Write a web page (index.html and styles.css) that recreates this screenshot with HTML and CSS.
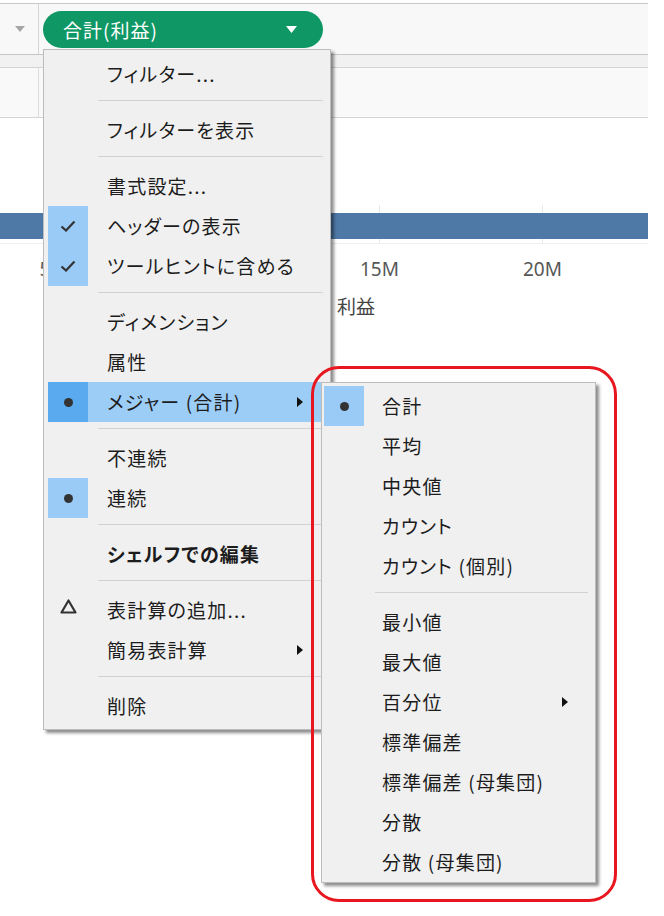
FILE: index.html
```html
<!DOCTYPE html>
<html lang="ja">
<head>
  <meta charset="UTF-8" />
  <meta name="viewport" content="width=device-width, initial-scale=1.0" />
  <title>メジャーのメニュー</title>
  <link rel="stylesheet" href="styles.css">
</head>
<body>
  <div class="view">
    <div class="shelf">
      <div class="shelf-cap">
        <svg class="caret" width="10" height="6" viewBox="0 0 10 6"><path d="M0 0h10L5 6z" fill="#a6a6a6"/></svg>
      </div>
      <div class="pill">
        <span>合計(利益)</span>
        <svg width="11" height="7" viewBox="0 0 11 7"><path d="M0 0h11L5.5 7z" fill="#fff"/></svg>
      </div>
    </div>
    <div class="band"></div>
    <div class="header-row"><div class="header-cap"></div></div>

    <div class="chart">
      <div class="plot">
        <div class="bar"></div>
      </div>
      <div class="ticks">
        <span>5M</span>
        <span></span>
        <span>15M</span>
        <span>20M</span>
      </div>
      <div class="axis-title">利益</div>
    </div>
  </div>

  <!-- context menu for the pill -->
  <div class="menu main-menu">
    <div class="item"><span class="ico"></span><span class="label">フィルター...</span></div>
    <div class="sep"></div>
    <div class="item"><span class="ico"></span><span class="label">フィルターを表示</span></div>
    <div class="sep"></div>
    <div class="item"><span class="ico"></span><span class="label">書式設定...</span></div>
    <div class="item"><span class="ico on"><svg width="16" height="12" viewBox="0 0 16 12"><path d="M1.5 6.5l4.5 4L14.5 1.5" fill="none" stroke="#333" stroke-width="2.2"/></svg></span><span class="label">ヘッダーの表示</span></div>
    <div class="item"><span class="ico on"><svg width="16" height="12" viewBox="0 0 16 12"><path d="M1.5 6.5l4.5 4L14.5 1.5" fill="none" stroke="#333" stroke-width="2.2"/></svg></span><span class="label">ツールヒントに含める</span></div>
    <div class="sep"></div>
    <div class="item"><span class="ico"></span><span class="label">ディメンション</span></div>
    <div class="item"><span class="ico"></span><span class="label">属性</span></div>
    <div class="item hot"><span class="ico"><span class="dot"></span></span><span class="label">メジャー (合計)</span><span class="sub-arrow"></span></div>
    <div class="sep"></div>
    <div class="item"><span class="ico"></span><span class="label">不連続</span></div>
    <div class="item"><span class="ico on"><span class="dot"></span></span><span class="label">連続</span></div>
    <div class="sep"></div>
    <div class="item"><span class="ico"></span><span class="label bold">シェルフでの編集</span></div>
    <div class="sep"></div>
    <div class="item"><span class="ico delta"><svg width="17" height="15" viewBox="0 0 17 15"><path d="M8.5 1.5L1.5 13.5h14z" fill="none" stroke="#333" stroke-width="2.2" stroke-linejoin="round"/></svg></span><span class="label">表計算の追加...</span></div>
    <div class="item"><span class="ico"></span><span class="label">簡易表計算</span><span class="sub-arrow"></span></div>
    <div class="sep"></div>
    <div class="item"><span class="ico"></span><span class="label">削除</span></div>
  </div>

  <!-- aggregation submenu -->
  <div class="menu sub-menu">
    <div class="item"><span class="ico on"><span class="dot"></span></span><span class="label">合計</span></div>
    <div class="item"><span class="ico"></span><span class="label">平均</span></div>
    <div class="item"><span class="ico"></span><span class="label">中央値</span></div>
    <div class="item"><span class="ico"></span><span class="label">カウント</span></div>
    <div class="item"><span class="ico"></span><span class="label">カウント (個別)</span></div>
    <div class="sep"></div>
    <div class="item"><span class="ico"></span><span class="label">最小値</span></div>
    <div class="item"><span class="ico"></span><span class="label">最大値</span></div>
    <div class="item"><span class="ico"></span><span class="label">百分位</span><span class="sub-arrow"></span></div>
    <div class="item"><span class="ico"></span><span class="label">標準偏差</span></div>
    <div class="item"><span class="ico"></span><span class="label">標準偏差 (母集団)</span></div>
    <div class="item"><span class="ico"></span><span class="label">分散</span></div>
    <div class="item"><span class="ico"></span><span class="label">分散 (母集団)</span></div>
  </div>

  <div class="callout"></div>
</body>
</html>
```

FILE: styles.css
```css
body {
  margin: 0;
  width: 664px;
  height: 916px;
  position: relative;
  overflow: hidden;
  background-color: #fff;
  font-family: "Noto Sans CJK JP", "Noto Sans", sans-serif;
  color: #1c1c1c;
}
.view {
  width: 648px;
  padding-top: 3px;
}
.shelf {
  display: flex;
  height: 50px;
  border-top: 1px solid #c9c9c9;
  border-bottom: 1px solid #c6c6c6;
  background-color: #f8f8f8;
}
.shelf-cap {
  width: 38px;
  border-right: 1px solid #d6d6d6;
  display: flex;
  align-items: center;
  justify-content: center;
}
.caret {
  margin-left: 2px;
}
.pill {
  margin: 7px 0 0 4px;
  width: 280px;
  height: 37px;
  box-sizing: border-box;
  padding: 0 26px 0 20px;
  border-radius: 19px;
  background-color: #0f9865;
  color: #fff;
  display: flex;
  align-items: center;
  justify-content: space-between;
  font-size: 19px;
  letter-spacing: 1px;
}
.band {
  height: 12px;
  background-color: #f1f1f1;
  border-bottom: 1px solid #d4d4d4;
}
.header-row {
  height: 49px;
  background-color: #f9f9f9;
  border-bottom: 1px solid #d4d4d4;
}
.header-cap {
  width: 38px;
  height: 100%;
  border-right: 1px solid #dcdcdc;
}
.chart {
  padding-top: 87px;
}
.plot {
  padding: 8px 0 4px;
  border-bottom: 1px solid #efefef;
  background-image: repeating-linear-gradient(90deg, transparent 0, transparent 162px, #e9e9e9 162px, #e9e9e9 163px);
  background-position: 54px 0;
}
.bar {
  height: 26px;
  background-color: #4e79a7;
}
.ticks {
  display: grid;
  grid-template-columns: repeat(4, 163px);
  margin-left: -28px;
  padding-top: 13px;
  font-family: "Noto Sans", sans-serif;
  font-size: 19px;
  line-height: 24px;
  color: #575757;
  text-align: center;
}
.axis-title {
  padding: 12px 0 0 337px;
  font-size: 19px;
  line-height: 26px;
  color: #444;
}

/* menus */
.menu {
  position: absolute;
  box-sizing: border-box;
  background-color: #f0f0f0;
  border: 1px solid #bdbdbd;
  box-shadow: 3px 3px 3px rgba(0, 0, 0, 0.45);
  font-size: 19px;
  letter-spacing: 1.2px;
  font-feature-settings: "palt";
}
.main-menu {
  left: 43px;
  top: 49px;
  width: 288px;
  padding: 4px 4px 3px;
}
.sub-menu {
  left: 321px;
  top: 382px;
  width: 275px;
  height: 501px;
  padding: 3px 3px 0 2px;
}
.item {
  display: flex;
  align-items: center;
  height: 40px;
  line-height: 40px;
}
.ico {
  width: 40px;
  height: 40px;
  flex: none;
  display: flex;
  align-items: center;
  justify-content: center;
}
.ico.on {
  background-color: #99cbf6;
}
.ico.delta {
  align-items: flex-start;
  padding-top: 9px;
  box-sizing: border-box;
}
.label {
  flex: 1;
  margin-left: 19px;
  white-space: nowrap;
}
.sub-menu .label {
  margin-left: 18px;
}
.bold {
  font-weight: bold;
}
.item.hot {
  background-color: #9ccdf7;
}
.item.hot .ico {
  background-color: #5aaaf0;
}
.dot {
  width: 9px;
  height: 9px;
  border-radius: 50%;
  background-color: #333;
}
.sub-arrow {
  width: 0;
  height: 0;
  margin-right: 23px;
  border-top: 5px solid transparent;
  border-bottom: 5px solid transparent;
  border-left: 6px solid #111;
}
.sub-menu .sub-arrow {
  margin-right: 24px;
}
.sep {
  height: 1px;
  margin: 6px 3px 9px 50px;
  background-color: #d2d2d2;
}
.sub-menu .sep {
  margin-left: 51px;
  margin-right: 4px;
}

/* red annotation round the submenu */
.callout {
  position: absolute;
  left: 311px;
  top: 366px;
  width: 306px;
  height: 536px;
  box-sizing: border-box;
  border: 3.5px solid #e8161e;
  border-radius: 28px;
}
```
